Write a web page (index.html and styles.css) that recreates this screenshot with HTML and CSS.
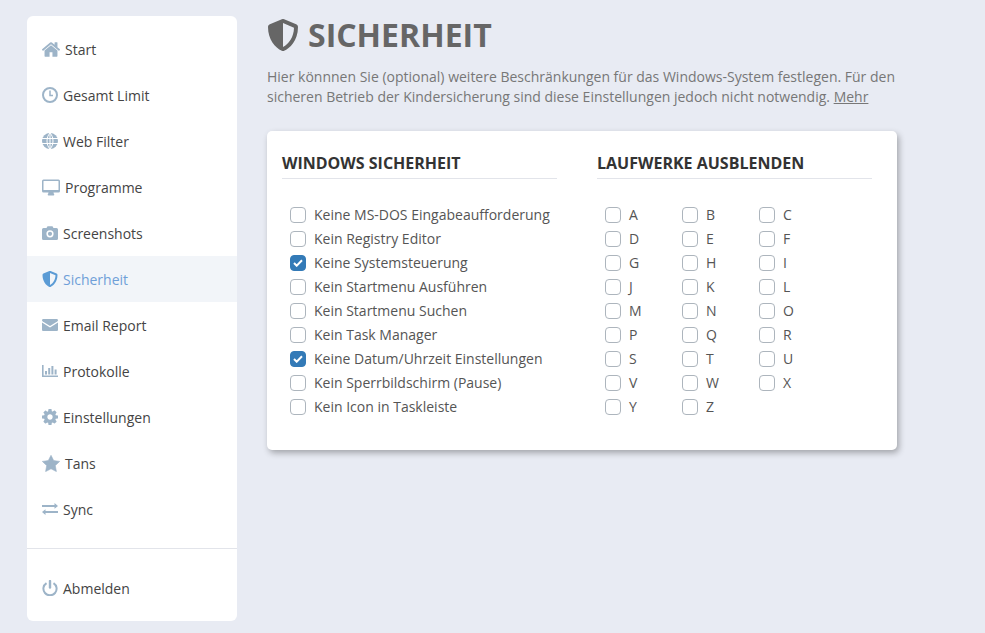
FILE: index.html
```html
<!DOCTYPE html>
<html lang="de">
<head>
<meta charset="utf-8">
<title>Sicherheit</title>
<link rel="stylesheet" href="styles.css">
</head>
<body>
<div class="page">
  <aside class="sidebar">
    <nav class="nav">
      <a class="item"><svg class="icon wide" viewBox="93 256 1606 1280"><path d="M1472 992v480q0 26-19 45t-45 19h-384v-384h-256v384h-384q-26 0-45-19t-19-45v-480q0-1 .5-3t.5-3l575-474 575 474q1 2 1 6zm223-69l-62 74q-8 9-21 11h-3q-13 0-21-7l-692-577-692 577q-12 8-24 7-13-2-21-11l-62-74q-8-10-7-23.500t11-21.500l719-599q32-26 76-26t76 26l244 204v-195q0-14 9-23t23-9h192q14 0 23 9t9 23v408l219 182q10 8 11 21.500t-7 23.500z"/></svg><span>Start</span></a>
      <a class="item"><svg class="icon" viewBox="0 0 16 16"><circle cx="8" cy="8" r="7" class="ring"/><path d="M8 3.500v5h3" class="hand"/></svg><span>Gesamt Limit</span></a>
      <a class="item"><svg class="icon" viewBox="0 0 16 16"><circle cx="8" cy="8" r="8"/><path d="M0 5.500h16M0 10.500h16M8 0v16M8 0C4 4 4 12 8 16M8 0c4 4 4 12 0 16" class="lines"/></svg><span>Web Filter</span></a>
      <a class="item"><svg class="icon wide" viewBox="0 0 18 16"><path fill-rule="evenodd" d="M1.500 0h15A1.500 1.500 0 0 1 18 1.500v10a1.500 1.500 0 0 1-1.500 1.500H11.500c0 1 .8 1.500.8 2.200 0 .5-.3.800-.8.800h-5c-.5 0-.8-.3-.8-.8 0-.7.8-1.200.8-2.200H1.500A1.500 1.500 0 0 1 0 11.500v-10A1.500 1.500 0 0 1 1.500 0zm.3 1.500a.3.3 0 0 0-.3.300v8.400c0 .2.100.3.300.3h14.400a.3.300 0 0 0 .3-.3V1.800a.3.300 0 0 0-.3-.3z"/></svg><span>Programme</span></a>
      <a class="item"><svg class="icon" viewBox="0 0 16 14"><path fill-rule="evenodd" d="M1.500 2H4.500L5.500.3h5L11.500 2h3A1.500 1.500 0 0 1 16 3.500v9a1.500 1.500 0 0 1-1.500 1.500h-13A1.500 1.500 0 0 1 0 12.500v-9A1.500 1.500 0 0 1 1.500 2zM8 4.200a3.600 3.600 0 1 0 0 7.200 3.600 3.600 0 0 0 0-7.200zm0 1.500a2.100 2.100 0 1 1 0 4.200 2.100 2.100 0 0 1 0-4.200z"/></svg><span>Screenshots</span></a>
      <a class="item active"><svg class="icon" viewBox="0 0 512 512"><path d="M466.500 83.700l-192-80a48.150 48.150 0 0 0-36.900 0l-192 80C27.700 91.100 16 108.600 16 128c0 198.500 114.500 335.700 221.500 380.300 11.800 4.900 25.100 4.900 36.900 0C360.100 472.600 496 349.300 496 128c0-19.400-11.700-36.900-29.500-44.300zM256.100 446.300l-.1-381 175.900 73.300c-3.300 151.400-82.100 261.100-175.800 307.700z"/></svg><span>Sicherheit</span></a>
      <a class="item"><svg class="icon" viewBox="0 0 16 12"><path d="M0 1.300C0 .6.600 0 1.300 0h13.400c.7 0 1.300.6 1.300 1.300 0 .6-.4 1-.8 1.300L8 7 .8 2.600C.4 2.300 0 1.900 0 1.300z"/><path d="M0 3.600l8 5 8-5v7.100c0 .7-.6 1.300-1.300 1.300H1.300C.6 12 0 11.400 0 10.700z"/></svg><span>Email Report</span></a>
      <a class="item"><svg class="icon" viewBox="0 0 16 12"><path d="M0 0h1.600v10.400H16V12H0zM3 6h2v3.400H3zM6.200 3h2v6.400h-2zM9.400 1h2v8.400h-2zM12.600 4.500h2v4.900h-2z"/></svg><span>Protokolle</span></a>
      <a class="item"><svg class="icon" viewBox="128 128 1536 1536"><path d="M1152 896q0-106-75-181t-181-75-181 75-75 181 75 181 181 75 181-75 75-181zm512-109v222q0 12-8 23t-20 13l-185 28q-19 54-39 91 35 50 107 138 10 12 10 25t-9 23q-27 37-99 108t-94 71q-12 0-26-9l-138-108q-44 23-91 38-16 136-29 186-7 28-36 28h-222q-14 0-24.500-8.500t-11.500-21.500l-28-184q-49-16-90-37l-141 107q-10 9-25 9-14 0-25-11-126-114-165-168-7-10-7-23 0-12 8-23 15-21 51-66.500t54-70.500q-27-50-41-99l-183-27q-13-2-21-12.500t-8-23.500v-222q0-12 8-23t19-13l186-28q14-46 39-92-40-57-107-138-10-12-10-24 0-10 9-23 26-36 98.500-107.500t94.500-71.500q13 0 26 10l138 107q44-23 91-38 16-136 29-186 7-28 36-28h222q14 0 24.500 8.500t11.500 21.500l28 184q49 16 90 37l142-107q9-9 24-9 13 0 25 10 129 119 165 170 7 8 7 22 0 12-8 23-15 21-51 66.500t-54 70.500q26 50 41 98l183 28q13 2 21 12.500t8 23.500z"/></svg><span>Einstellungen</span></a>
      <a class="item"><svg class="icon wide" viewBox="0 0 18 17"><path d="M9 .3l2.700 5.300 6 .8-4.400 4.200 1.100 6L9 13.800l-5.400 2.800 1.100-6L.3 6.400l6-.8z" stroke-linejoin="round" class="star"/></svg><span>Tans</span></a>
      <a class="item"><svg class="icon" viewBox="0 0 16 12"><path d="M12.500 0L16 2.900 12.500 5.800V3.900H0V2h12.500zM3.500 6.200v1.900H16V10H3.500v2L0 9.100z"/></svg><span>Sync</span></a>
    </nav>
    <div class="bottom">
      <a class="item"><svg class="icon" viewBox="0 0 16 16"><path d="M4.500 3.100a6.600 6.600 0 1 0 7 0" class="ring"/><path d="M8 1v6.500" class="power"/></svg><span>Abmelden</span></a>
    </div>
  </aside>
  <main class="main">
    <h1 class="title"><svg class="title-icon" viewBox="0 0 512 512"><path d="M466.500 83.700l-192-80a48.150 48.150 0 0 0-36.900 0l-192 80C27.700 91.100 16 108.600 16 128c0 198.500 114.500 335.700 221.500 380.300 11.800 4.900 25.100 4.900 36.900 0C360.100 472.600 496 349.300 496 128c0-19.400-11.700-36.900-29.500-44.300zM256.100 446.300l-.1-381 175.900 73.300c-3.300 151.400-82.100 261.100-175.800 307.700z"/></svg>SICHERHEIT</h1>
    <p class="intro">Hier könnnen Sie (optional) weitere Beschränkungen für das Windows-System festlegen. Für den sicheren Betrieb der Kindersicherung sind diese Einstellungen jedoch nicht notwendig. <a class="more">Mehr</a></p>
    <section class="card">
      <div class="col">
        <h2 class="heading">WINDOWS SICHERHEIT</h2>
        <div class="list">
          <label class="check"><i class="box"></i>Keine MS-DOS Eingabeaufforderung</label>
          <label class="check"><i class="box"></i>Kein Registry Editor</label>
          <label class="check"><i class="box on"><svg viewBox="0 0 10 8"><path d="M1 4l2.700 2.700L9 1.300"/></svg></i>Keine Systemsteuerung</label>
          <label class="check"><i class="box"></i>Kein Startmenu Ausführen</label>
          <label class="check"><i class="box"></i>Kein Startmenu Suchen</label>
          <label class="check"><i class="box"></i>Kein Task Manager</label>
          <label class="check"><i class="box on"><svg viewBox="0 0 10 8"><path d="M1 4l2.700 2.700L9 1.300"/></svg></i>Keine Datum/Uhrzeit Einstellungen</label>
          <label class="check"><i class="box"></i>Kein Sperrbildschirm (Pause)</label>
          <label class="check"><i class="box"></i>Kein Icon in Taskleiste</label>
        </div>
      </div>
      <div class="col">
        <h2 class="heading">LAUFWERKE AUSBLENDEN</h2>
        <div class="list drives">
          <label class="check"><i class="box"></i>A</label>
          <label class="check"><i class="box"></i>B</label>
          <label class="check"><i class="box"></i>C</label>
          <label class="check"><i class="box"></i>D</label>
          <label class="check"><i class="box"></i>E</label>
          <label class="check"><i class="box"></i>F</label>
          <label class="check"><i class="box"></i>G</label>
          <label class="check"><i class="box"></i>H</label>
          <label class="check"><i class="box"></i>I</label>
          <label class="check"><i class="box"></i>J</label>
          <label class="check"><i class="box"></i>K</label>
          <label class="check"><i class="box"></i>L</label>
          <label class="check"><i class="box"></i>M</label>
          <label class="check"><i class="box"></i>N</label>
          <label class="check"><i class="box"></i>O</label>
          <label class="check"><i class="box"></i>P</label>
          <label class="check"><i class="box"></i>Q</label>
          <label class="check"><i class="box"></i>R</label>
          <label class="check"><i class="box"></i>S</label>
          <label class="check"><i class="box"></i>T</label>
          <label class="check"><i class="box"></i>U</label>
          <label class="check"><i class="box"></i>V</label>
          <label class="check"><i class="box"></i>W</label>
          <label class="check"><i class="box"></i>X</label>
          <label class="check"><i class="box"></i>Y</label>
          <label class="check"><i class="box"></i>Z</label>
        </div>
      </div>
    </section>
  </main>
</div>
</body>
</html>
```
FILE: styles.css
```css
* { box-sizing: border-box; }
html, body { margin: 0; height: 100%; }
body {
  background: #e8ebf3;
  font-family: "Open Sans", sans-serif;
  font-size: 14px;
  color: #444;
  overflow: hidden;
}
.page {
  display: flex;
  align-items: flex-start;
  gap: 30px;
  padding: 16px 27px 12px;
}
.sidebar {
  width: 210px;
  height: 605px;
  flex: none;
  background: #fff;
  border-radius: 6px;
  padding-top: 10px;
}
.nav { border-bottom: 1px solid #e2e4ea; padding-bottom: 16px; }
.bottom { padding-top: 16px; }
.item {
  display: flex;
  align-items: center;
  gap: 5px;
  height: 46px;
  padding-left: 15px;
  color: #444;
  font-size: 14px;
}
.icon { width: 16px; height: 16px; flex: none; fill: #9db4c8; }
.icon.wide { width: 18px; height: 17px; }
.ring { fill: none; stroke: #9db4c8; stroke-width: 2; }
.hand { fill: none; stroke: #9db4c8; stroke-width: 1.500; }
.lines { fill: none; stroke: #fff; stroke-width: 1; }
.power { fill: none; stroke: #9db4c8; stroke-width: 2.400; stroke-linecap: round; }
.star { stroke: #9db4c8; stroke-width: .6; }
.item.active { background: #f2f5f9; color: #6f9fd8; }
.item.active .icon { fill: #5b9bd5; }
.main { width: 630px; flex: none; }
.title {
  display: flex;
  align-items: center;
  gap: 9px;
  margin: 0;
  height: 38px;
  font-size: 32px;
  font-weight: 700;
  color: #666;
  line-height: 38px;
}
.title-icon { width: 32px; height: 32px; fill: #666; flex: none; }
.intro {
  margin: 13px 0 0;
  font-size: 14px;
  line-height: 20px;
  color: #777;
  width: 640px;
}
.more { text-decoration: underline; }
.card {
  display: flex;
  gap: 40px;
  margin-top: 24px;
  width: 630px;
  height: 319px;
  background: #fff;
  border-radius: 5px;
  padding: 20px 15px;
  box-shadow: 2px 3px 6px rgba(0,0,0,.3);
}
.col { width: 275px; flex: none; }
.heading {
  margin: 0;
  height: 28px;
  font-size: 16px;
  font-weight: 700;
  line-height: 24px;
  color: #333;
  border-bottom: 1px solid #e2e4ea;
}
.list { padding: 23px 0 0 8px; }
.drives {
  display: grid;
  grid-template-columns: repeat(3, 77px);
}
.check {
  display: flex;
  align-items: center;
  gap: 8px;
  height: 24px;
  font-size: 14px;
  color: #555;
}
.box {
  width: 16px;
  height: 16px;
  flex: none;
  margin-top: 2px;
  border: 1px solid #adb5bd;
  border-radius: 4px;
  background: #fff;
  display: flex;
  align-items: center;
  justify-content: center;
}
.box.on { background: #337ab7; border-color: #337ab7; }
.box svg { width: 10px; height: 8px; }
.box svg path { fill: none; stroke: #fff; stroke-width: 2; }
```
